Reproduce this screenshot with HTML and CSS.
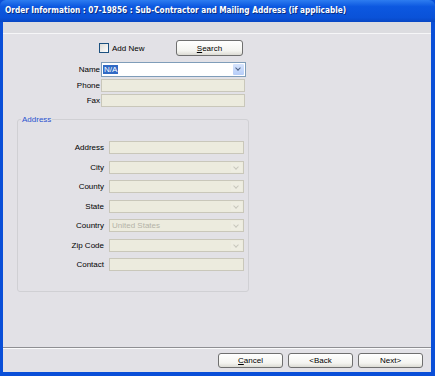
FILE: index.html
```html
<!DOCTYPE html>
<html lang="en">
<head>
    <meta charset="UTF-8">
    <title>Order Information</title>
    <link rel="stylesheet" href="styles.css">
</head>
<body>

<div class="window">
    <div class="titlebar">Order Information : 07-19856 : Sub-Contractor and Mailing Address (if applicable)</div>

    <div class="frame">
        <div class="header-strip"></div>

        <div class="main">
            <div class="top-row">
                <label class="check"><span class="box"></span>Add New</label>
                <button class="btn search"><u>S</u>earch</button>
            </div>

            <div class="top-form">
                <label>Name</label>
                <div class="field combo active"><span class="sel">N/A</span><span class="arrow"></span></div>
                <label>Phone</label>
                <div class="field"></div>
                <label>Fax</label>
                <div class="field"></div>
            </div>

            <fieldset class="group">
                <legend>Address</legend>
                <div class="group-form">
                    <label>Address</label>
                    <div class="field"></div>
                    <label>City</label>
                    <div class="field combo"><span class="arrow"></span></div>
                    <label>County</label>
                    <div class="field combo"><span class="arrow"></span></div>
                    <label>State</label>
                    <div class="field combo"><span class="arrow"></span></div>
                    <label>Country</label>
                    <div class="field combo"><span class="val">United States</span><span class="arrow"></span></div>
                    <label>Zip Code</label>
                    <div class="field combo"><span class="arrow"></span></div>
                    <label>Contact</label>
                    <div class="field"></div>
                </div>
            </fieldset>
        </div>

        <div class="footer">
            <button class="btn"><u>C</u>ancel</button>
            <button class="btn">&lt;Back</button>
            <button class="btn">Next&gt;</button>
        </div>
    </div>
</div>

</body>
</html>
```

FILE: styles.css
```css
body {
    margin: 0;
    font-family: "Liberation Sans", Arial, sans-serif;
    font-size: 8px;
    color: #000;
}
.window {
    width: 435px;
    height: 376px;
    display: flex;
    flex-direction: column;
    background: #0a4fd8;
}
.titlebar {
    height: 22px;
    line-height: 21px;
    padding-left: 5px;
    color: #fff;
    font-family: "DejaVu Sans Condensed", "DejaVu Sans", sans-serif;
    font-weight: bold;
    font-size: 8.2px;
    background: linear-gradient(#2d7cf0, #0c58e0 30%, #0a52d8 80%, #0847c4);
    border-radius: 6px 6px 0 0;
    text-shadow: 1px 1px 0 #0a2d80;
}
.frame {
    flex: 1;
    display: flex;
    flex-direction: column;
    margin: 0 4px 4px 3px;
    background: #e2e1e6;
}
.header-strip {
    height: 11px;
    background: #dcdce0;
    border-bottom: 1px solid #f6f6f8;
}
.main {
    flex: 1;
    padding-top: 6px;
}
.top-row {
    display: flex;
    align-items: center;
    height: 16px;
}
.check {
    display: flex;
    align-items: center;
    margin-left: 96px;
    width: 77px;
}
.box {
    width: 8px;
    height: 8px;
    border: 1px solid #1c5180;
    background: linear-gradient(135deg, #dcdcd7, #fff);
    margin-right: 3px;
}
.btn {
    height: 16px;
    padding: 0;
    font-family: "Liberation Sans", Arial, sans-serif;
    font-size: 8px;
    color: #000;
    border: 1px solid #6f6f6f;
    border-radius: 3px;
    background: linear-gradient(#fff, #f4f4f0 70%, #dcdbd4);
}
.search {
    width: 67px;
}
.top-form {
    display: grid;
    grid-template-columns: 97px 145px;
    grid-template-rows: 15px 13px 13px;
    row-gap: 2px;
    column-gap: 1px;
    margin-top: 6px;
    align-items: center;
}
.top-form label,
.group-form label {
    text-align: right;
}
.field {
    height: 100%;
    box-sizing: border-box;
    border: 1px solid #c9c7ba;
    background: #ecebde;
    display: flex;
    align-items: center;
    position: relative;
}
.top-form .field:not(.active) {
    width: 144px;
}
.field.active {
    background: #fff;
    border-color: #7f9db9;
}
.sel {
    background: #316ac5;
    color: #fff;
    padding: 0 1px;
    margin-left: 1px;
}
.val {
    color: #b4b3a8;
    margin-left: 2px;
}
.arrow {
    position: absolute;
    right: 1px;
    top: 1px;
    bottom: 1px;
    width: 11px;
    background: #eeede2;
}
.arrow::after {
    content: "";
    position: absolute;
    left: 3px;
    top: 2px;
    width: 3px;
    height: 3px;
    border-right: 1.5px solid #c8c7bd;
    border-bottom: 1.5px solid #c8c7bd;
    transform: rotate(45deg);
}
.active .arrow {
    background: linear-gradient(#d6e4fd, #b6cdf8);
    border-radius: 1px;
}
.active .arrow::after {
    border-color: #4d6185;
}
.group {
    width: 232px;
    height: 177px;
    box-sizing: border-box;
    margin: 8px 0 0 14px;
    padding: 0;
    border: 1px solid #d0d0d4;
    border-radius: 3px;
}
.group legend {
    color: #2a52d0;
    padding: 0 1px;
    margin-left: 3px;
}
.group-form {
    display: grid;
    grid-template-columns: 86px 135px;
    grid-auto-rows: 13px;
    column-gap: 5px;
    row-gap: 6.5px;
    margin-top: 17px;
    align-items: center;
}
.footer {
    height: 25px;
    box-sizing: border-box;
    border-top: 1px solid #8f8f93;
    box-shadow: inset 0 1px 0 #fafafb;
    display: flex;
    justify-content: flex-end;
    align-items: flex-start;
    gap: 5px;
    padding: 5px 8px 0 0;
}
.footer .btn {
    width: 65px;
    height: 15px;
}
```
